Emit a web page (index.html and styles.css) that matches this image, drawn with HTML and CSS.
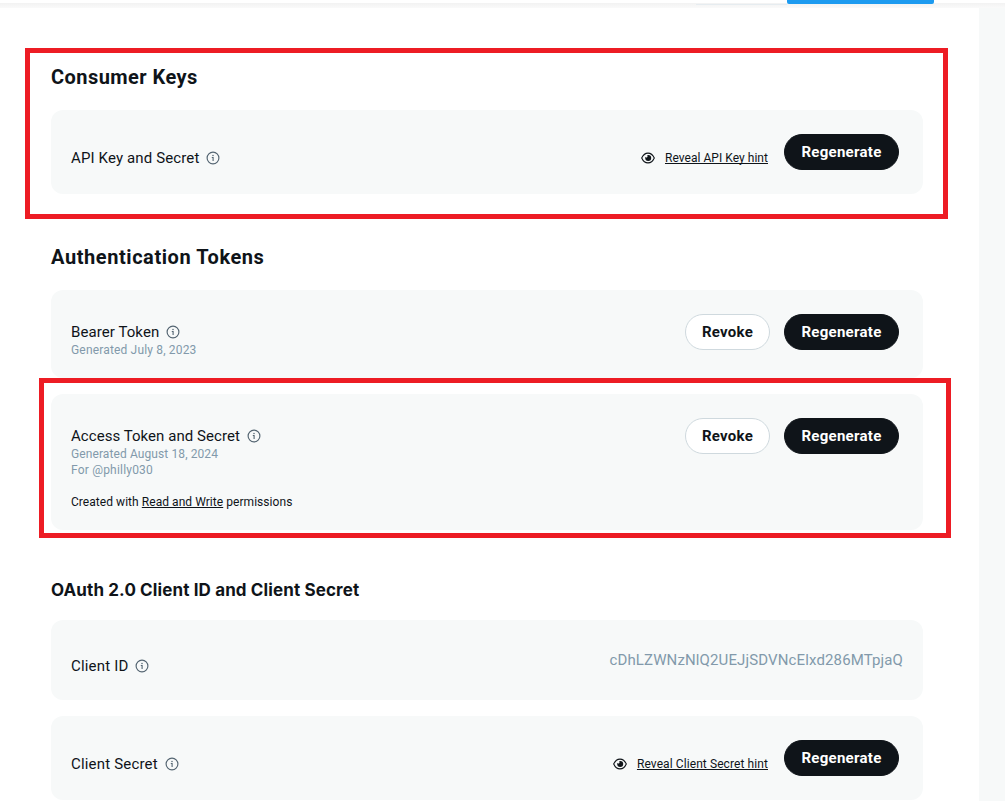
FILE: index.html
```
<!DOCTYPE html>
<html lang="en">
<head>
<meta charset="utf-8">
<title>Keys and tokens</title>
<link rel="stylesheet" href="styles.css">
</head>
<body>
<svg class="defs" aria-hidden="true">
  <symbol id="info" viewBox="0 0 14 14">
    <circle cx="7" cy="7" r="5.9" fill="none" stroke="currentColor" stroke-width="1.15"/>
    <circle cx="7" cy="4.4" r=".75" fill="currentColor"/>
    <path d="M5.8 6.5H7.1V10" fill="none" stroke="currentColor" stroke-width="1.1"/>
  </symbol>
  <symbol id="eye" viewBox="0 0 14 12">
    <path d="M.7 6C2.2 2.7 4.4 1.1 7 1.1S11.8 2.7 13.3 6C11.8 9.3 9.6 10.9 7 10.9S2.2 9.3.7 6Z" fill="none" stroke="currentColor" stroke-width="1.1"/>
    <path d="M7.2 3A3 3 0 1 1 4.2 6C4.2 5.7 4.2 5.4 4.3 5.1C4.9 5.9 6.4 5.7 6.5 4.5C6.5 4 6.4 3.5 6.1 3.2Q6.6 3 7.2 3Z" fill="currentColor"/>
  </symbol>
</svg>
<header class="tabs"><div class="tab-line"></div><div class="tab-active"></div></header>
<main class="page">
  <section class="group">
    <h2>Consumer Keys</h2>
    <div class="card card-hint">
      <div class="info"><div class="label api">API Key and Secret<svg><use href="#info"/></svg></div></div>
      <div class="actions">
        <a class="hint"><svg><use href="#eye"/></svg><span class="hint-api">Reveal API Key hint</span></a>
        <button class="btn dark">Regenerate</button>
      </div>
    </div>
  </section>
  <section class="group">
    <h2 class="auth">Authentication Tokens</h2>
    <div class="card card-bearer">
      <div class="info">
        <div class="label bearer">Bearer Token<svg><use href="#info"/></svg></div>
        <div class="meta date">Generated July 8, 2023</div>
      </div>
      <div class="actions"><button class="btn light">Revoke</button><button class="btn dark">Regenerate</button></div>
    </div>
    <div class="card card-access">
      <div class="info">
        <div class="label access">Access Token and Secret<svg><use href="#info"/></svg></div>
        <div class="meta">Generated August 18, 2024</div>
        <div class="meta handle">For @philly030</div>
        <p class="perm">Created with <u>Read and Write</u> permissions</p>
      </div>
      <div class="actions"><button class="btn light">Revoke</button><button class="btn dark">Regenerate</button></div>
    </div>
  </section>
  <section class="group">
    <h3>OAuth 2.0 Client ID and Client Secret</h3>
    <div class="card card-id">
      <div class="info"><div class="label client">Client ID<svg><use href="#info"/></svg></div></div>
      <div class="value">cDhLZWNzNlQ2UEJjSDVNcElxd286MTpjaQ</div>
    </div>
    <div class="card card-hint">
      <div class="info"><div class="label client">Client Secret<svg><use href="#info"/></svg></div></div>
      <div class="actions">
        <a class="hint"><svg><use href="#eye"/></svg><span>Reveal Client Secret hint</span></a>
        <button class="btn dark">Regenerate</button>
      </div>
    </div>
  </section>
</main>
<div class="mark mark-consumer"></div>
<div class="mark mark-access"></div>
</body>
</html>
```
FILE: styles.css
```
* { box-sizing: border-box; }
html, body { height: 100%; }
body {
  margin: 0;
  position: relative;
  overflow: hidden;
  background: #f7f9f9;
  color: #0f1419;
  font-family: Roboto, "Liberation Sans", sans-serif;
}
.defs { display: none; }
.tabs {
  display: flex;
  align-items: flex-start;
  height: 8px;
  padding-left: 696px;
  background: linear-gradient(#fff 0 3px, #f2f2f2 3px, #fafafa 8px);
}
.tab-line { width: 91px; height: 1px; margin-top: 4px; background: #e6ecf0; }
.tab-active { width: 147px; height: 4px; background: #1d9bf0; border-radius: 0 0 2px 2px; }
.page {
  width: 979px;
  height: 793px;
  padding: 54px 56px 0 51px;
  background: #fff;
}
.group + .group { margin-top: 48px; }
h2, h3 { margin: 0; font-weight: 700; }
h2 { height: 48px; padding-top: 3px; font-size: 20px; line-height: 24px; letter-spacing: .45px; }
h2.auth { letter-spacing: .57px; }
h3 { height: 42px; padding-top: 1px; font: 700 17px/22px Inter, sans-serif; letter-spacing: .12px; }
.card {
  display: flex;
  justify-content: space-between;
  align-items: flex-start;
  padding: 24px 24px 0 20px;
  border-radius: 12px;
  background: #f7f9f9;
}
.card + .card { margin-top: 16px; }
.card-hint { height: 84px; }
.card-bearer { height: 88px; }
.card-access { height: 136px; }
.card-id { height: 80px; padding-right: 20px; }
.info { padding-top: 8px; }
.card-hint .info { padding-top: 14px; }
.card-id .info { padding-top: 12px; }
.label {
  display: flex;
  align-items: center;
  gap: 7px;
  height: 20px;
  font-size: 15px;
  line-height: 20px;
  letter-spacing: .05px;
}
.label.api { letter-spacing: .13px; }
.label.bearer { letter-spacing: .08px; }
.label.client { letter-spacing: .18px; }
.label svg { width: 14px; height: 14px; color: #536471; }
.meta { color: #8299ab; font-size: 12px; line-height: 16px; letter-spacing: .1px; }
.meta.date { letter-spacing: .17px; }
.meta.handle { letter-spacing: .2px; }
.perm { margin: 16px 0 0; font-size: 12px; line-height: 16px; letter-spacing: .05px; }
u, .hint span { text-decoration: underline; text-decoration-thickness: 1px; text-underline-offset: 1px; text-decoration-skip-ink: none; }
.actions { display: flex; gap: 14px; }
.hint {
  display: flex;
  align-items: center;
  gap: 10px;
  height: 16px;
  margin: 16px 2px 0 0;
  font-size: 12px;
  letter-spacing: .09px;
}
.hint-api { letter-spacing: .04px; }
.hint svg { width: 14px; height: 12px; }
.btn {
  height: 36px;
  padding: 0;
  border: 1px solid #cfd9de;
  border-radius: 18px;
  font: 700 15px/20px Roboto, sans-serif;
  letter-spacing: .27px;
}
.dark { width: 115px; border-color: #0f1419; background: #0f1419; color: #fff; }
.light { width: 85px; background: #fff; color: #0f1419; }
.value { padding-top: 6px; color: #8299ab; font-size: 15px; line-height: 20px; letter-spacing: .13px; }
.mark { position: absolute; border: 5px solid #ed1c24; }
.mark-consumer { left: 25px; top: 48px; width: 923px; height: 171px; }
.mark-access { left: 39px; top: 378px; width: 912px; height: 160px; }
```
